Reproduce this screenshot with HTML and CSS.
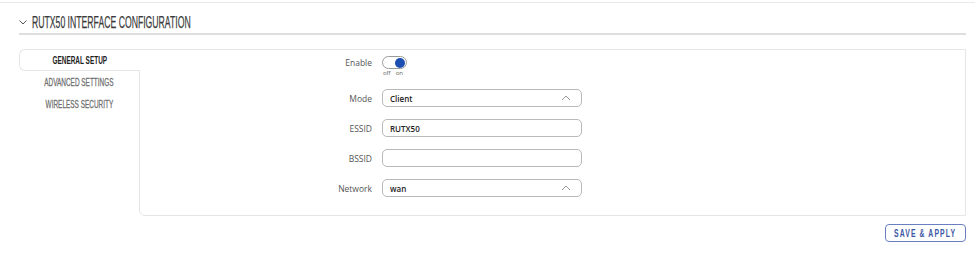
FILE: index.html
```html
<!DOCTYPE html>
<html lang="en">
<head>
    <meta charset="UTF-8">
    <meta name="viewport" content="width=device-width, initial-scale=1.0">
    <title>RUTX50 Interface Configuration</title>
    <link rel="stylesheet" href="styles.css">
</head>
<body>
    <div class="topline"></div>
    <div class="page">
      <div class="section-title">
        <svg class="chev" width="8" height="5" viewBox="0 0 8 5"><path d="M0.5 0.5 L4 4 L7.5 0.5" fill="none" stroke="#555" stroke-width="1"/></svg>
        <span class="cond title-text">RUTX50 INTERFACE CONFIGURATION</span>
      </div>

      <div class="panel">
        <div class="tabs">
          <div class="tab active"><span class="cond">GENERAL SETUP</span></div>
          <div class="tab"><span class="cond">ADVANCED SETTINGS</span></div>
          <div class="tab"><span class="cond">WIRELESS SECURITY</span></div>
        </div>
        <div class="content">
          <div class="row row-enable">
            <label>Enable</label>
            <div class="switch">
              <div class="track"><div class="knob"></div></div>
              <div class="switch-text"><span>off</span><span>on</span></div>
            </div>
          </div>
          <div class="row">
            <label>Mode</label>
            <div class="field select">
              <span>Client</span>
              <svg width="10" height="6" viewBox="0 0 10 6"><path d="M1 5 L5 1 L9 5" fill="none" stroke="#999" stroke-width="1"/></svg>
            </div>
          </div>
          <div class="row">
            <label>ESSID</label>
            <div class="field"><span>RUTX50</span></div>
          </div>
          <div class="row">
            <label>BSSID</label>
            <div class="field"></div>
          </div>
          <div class="row">
            <label>Network</label>
            <div class="field select">
              <span>wan</span>
              <svg width="10" height="6" viewBox="0 0 10 6"><path d="M1 5 L5 1 L9 5" fill="none" stroke="#999" stroke-width="1"/></svg>
            </div>
          </div>
        </div>
      </div>

      <div class="actions">
        <button class="save"><span class="cond">SAVE &amp; APPLY</span></button>
      </div>
    </div>
</body>
</html>
```

FILE: styles.css
```css
* {
    margin: 0;
    padding: 0;
    box-sizing: border-box;
}
body {
    width: 975px;
    height: 256px;
    background: #fff;
    font-family: "Open Sans", "Liberation Sans", sans-serif;
    color: #333;
    overflow: hidden;
}
.topline {
    height: 1px;
    margin-top: 2px;
    background: #e9e9e9;
}
.page {
    padding: 0 9px 0 19px;
}
.cond {
    display: inline-block;
    font-family: "Liberation Sans", Arial, sans-serif;
    white-space: nowrap;
    transform: scaleX(0.56);
}
.section-title {
    display: flex;
    align-items: center;
    height: 32px;
    padding-top: 8px;
    border-bottom: 2px solid #dedede;
}
.chev {
    margin-right: 5px;
}
.title-text {
    font-size: 16.5px;
    color: #3a3a3a;
    transform: scaleX(0.525);
    transform-origin: left center;
    -webkit-text-stroke: 0.25px #3a3a3a;
}
.panel {
    display: flex;
    margin-top: 14px;
}
.tabs {
    width: 120px;
    flex-shrink: 0;
}
.tab {
    height: 22px;
    display: flex;
    align-items: center;
    justify-content: center;
    font-size: 11.5px;
    color: #707070;
    -webkit-text-stroke: 0.3px #707070;
}
.tab.active {
    position: relative;
    z-index: 1;
    margin-right: -1px;
    background: #fff;
    color: #222;
    font-weight: bold;
    -webkit-text-stroke: 0;
    border: 1px solid #e6e6e6;
    border-right: none;
    border-radius: 6px 0 0 6px;
}
.content {
    flex: 1;
    height: 167px;
    border: 1px solid #e6e6e6;
    border-radius: 0 0 0 6px;
    padding-top: 6px;
}
.row {
    display: flex;
    align-items: center;
    height: 18px;
    margin-bottom: 12px;
}
.row-enable {
    align-items: flex-start;
    height: 21px;
    margin-bottom: 12px;
}
.row-enable label {
    padding-top: 1px;
}
.row label {
    width: 232px;
    text-align: right;
    font-size: 8.5px;
    color: #555;
}
.switch {
    margin-left: 10px;
    width: 25px;
}
.track {
    width: 25px;
    height: 13px;
    border: 1px solid #9a9a9a;
    border-radius: 7px;
    background: #fff;
    display: flex;
    justify-content: flex-end;
    align-items: center;
    padding-right: 1px;
}
.knob {
    width: 10px;
    height: 10px;
    border-radius: 50%;
    background: #1d4fb3;
}
.switch-text {
    display: flex;
    justify-content: space-between;
    padding: 0 4px 0 1px;
    font-size: 6px;
    color: #666;
    line-height: 8px;
}
.field {
    margin-left: 10px;
    width: 200px;
    height: 18px;
    border: 1px solid #b9b9b9;
    border-radius: 5px;
    display: flex;
    align-items: center;
    justify-content: space-between;
    padding: 0 10px 0 7px;
    font-size: 8px;
    font-weight: 600;
    color: #222;
}
.actions {
    display: flex;
    justify-content: flex-end;
    margin-top: 8px;
}
.save {
    width: 81px;
    height: 18px;
    border: 1px solid #6a7fbf;
    border-radius: 4px;
    background: #fff;
    color: #3c56a3;
    font-size: 11px;
    font-weight: bold;
    display: flex;
    align-items: center;
    justify-content: center;
    cursor: pointer;
}
.save .cond {
    letter-spacing: 1.8px;
    transform: scaleX(0.62);
}
```
